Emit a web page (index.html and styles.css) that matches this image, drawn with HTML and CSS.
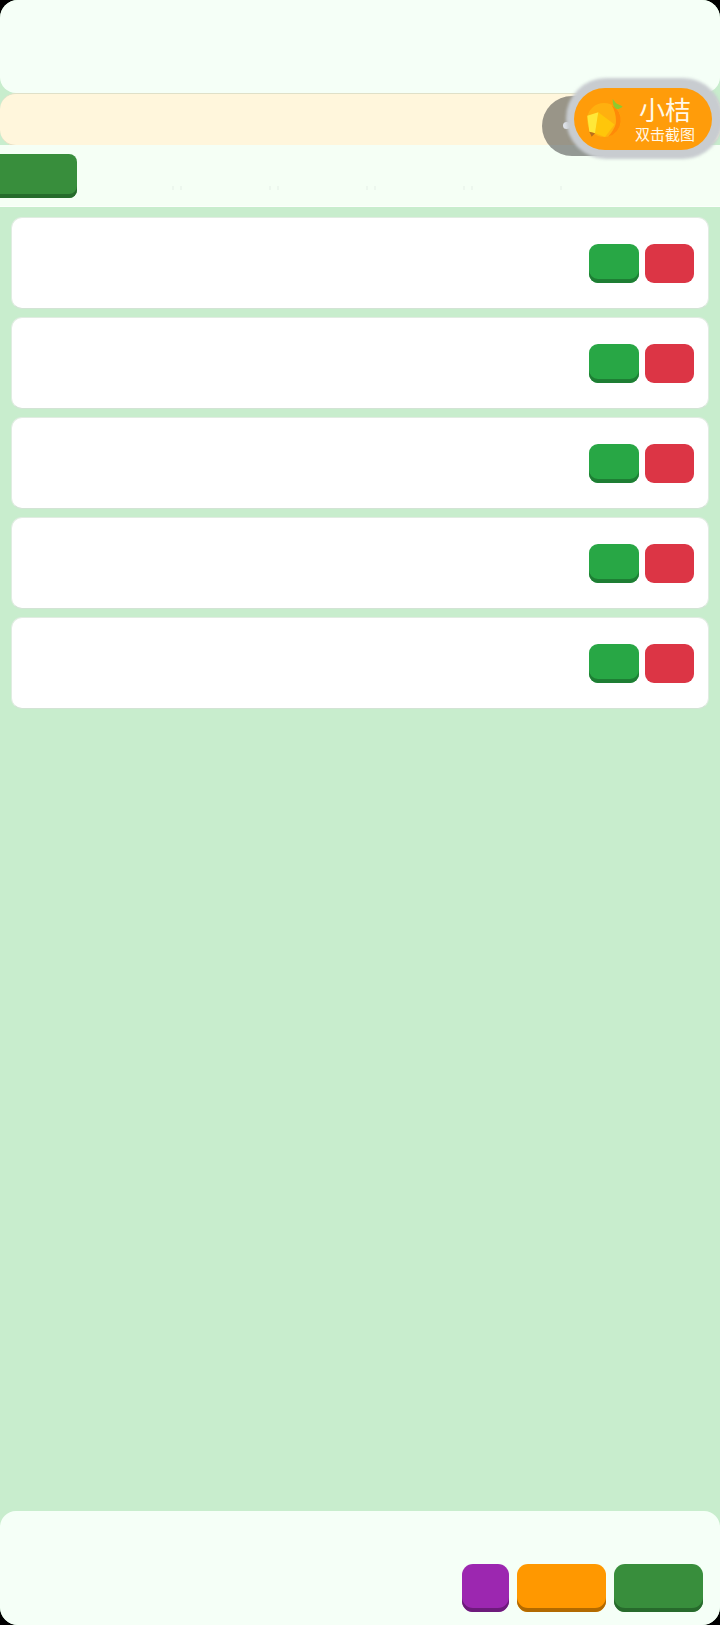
FILE: index.html
```html
<!DOCTYPE html>
<html lang="zh">
<head>
<meta charset="utf-8">
<title>小桔</title>
<link rel="stylesheet" href="styles.css">
</head>
<body>
<div class="app">
  <header class="header"></header>
  <div class="notice"></div>
  <nav class="tabs">
    <button class="btn btn-tab"></button>
    <div class="tab-marks">
      <span class="mark"><i></i><i></i></span>
      <span class="mark"><i></i><i></i></span>
      <span class="mark"><i></i><i></i></span>
      <span class="mark"><i></i><i></i></span>
      <span class="mark"><i></i></span>
    </div>
  </nav>
  <main class="list">
    <div class="card"><button class="btn btn-green"></button><button class="btn btn-red"></button></div>
    <div class="card"><button class="btn btn-green"></button><button class="btn btn-red"></button></div>
    <div class="card"><button class="btn btn-green"></button><button class="btn btn-red"></button></div>
    <div class="card"><button class="btn btn-green"></button><button class="btn btn-red"></button></div>
    <div class="card"><button class="btn btn-green"></button><button class="btn btn-red"></button></div>
  </main>
  <footer class="footer">
    <button class="btn btn-purple"></button>
    <button class="btn btn-orange"></button>
    <button class="btn btn-forest"></button>
  </footer>
  <div class="float-back"><span class="float-dot"></span></div>
  <div class="float-ring"></div>
  <div class="float-pill">
    <svg class="float-icon" viewBox="0 0 40 44" width="40" height="44" aria-hidden="true">
      <circle cx="19" cy="23" r="17" fill="#ffb00f"/>
      <path d="M26.700 8A17 17 0 0 1 23.300 39.500C28 34 31 29 31 24C31 18 29.500 13 26.700 8Z" fill="#ff8a08"/>
      <path d="M27.700 2C29.500 4 30.500 5.500 31.500 6.500C33.500 7.500 36 8.500 37.700 9.700C36 11 33.500 12.300 31.700 12C30 11 28.800 10 28.300 8C27.800 6 27.500 4 27.700 2Z" fill="#8fc92f"/>
      <path d="M13.300 15.300L29.500 27.500L20 40L10 36.300Z" fill="#ffc60a"/>
      <path d="M2.300 18.700L13.300 15.300L10 36.300L4.300 34.700Z" fill="#ffe838"/>
      <path d="M4.300 34.700L10 36.300L6.700 39.700Z" fill="#b96f1c"/>
    </svg>
    <div class="float-text">
      <span class="float-title">小桔</span>
      <span class="float-sub">双击截图</span>
    </div>
  </div>
</div>
</body>
</html>
```
FILE: styles.css
```css
* { box-sizing: border-box; }
html, body { margin: 0; padding: 0; background: #000; }
body { width: 720px; height: 1625px; overflow: hidden; }
button { border: 0; padding: 0; display: block; }

.app {
  position: relative;
  display: flex;
  flex-direction: column;
  width: 720px;
  height: 1625px;
  background: #c8edcd;
  border-radius: 18px;
  overflow: hidden;
}

.header {
  height: 93px;
  flex: none;
  background: #f5fff7;
  border-radius: 0 0 16px 16px;
}

.notice {
  height: 53px;
  flex: none;
  background: #fff6dc;
  border-top: 1px solid #dfe0c8;
  border-bottom: 1px solid #e8dfc4;
  border-radius: 16px;
}

.tabs {
  height: 62px;
  flex: none;
  display: flex;
  align-items: flex-start;
  background: #f5fff5;
  border-bottom: 1px solid #fbfffb;
  margin-top: -1px;
  padding-top: 9px;
}

.btn { border-radius: 9px; }

.btn-tab {
  width: 77px;
  height: 44px;
  flex: none;
  background: #388e3c;
  border-radius: 0 8px 8px 0;
  box-shadow: inset 0 -4px 0 #266b2c;
}

.tab-marks {
  flex: 1;
  display: flex;
  padding: 32px 0 0 95px;
  gap: 84px;
}

.mark { display: flex; gap: 6px; width: 13px; }
.mark i { display: block; width: 2px; height: 4px; background: #edf7ee; }

.list {
  flex: 1;
  display: flex;
  flex-direction: column;
  gap: 8px;
  padding: 10px 11px 0;
}

.card {
  height: 92px;
  flex: none;
  display: flex;
  justify-content: flex-end;
  align-items: center;
  gap: 6px;
  padding: 1px 14px 0 0;
  background: #fff;
  border: 1px solid #e0ece1;
  border-bottom-color: #d3e3d5;
  border-radius: 11px;
}

.btn-green, .btn-red { height: 39px; }
.btn-green { width: 50px; background: #28a745; box-shadow: inset 0 -4px 0 #1e7e34; }
.btn-red { width: 49px; background: #dc3545; }

.footer {
  height: 114px;
  flex: none;
  display: flex;
  justify-content: flex-end;
  align-items: flex-end;
  gap: 8px;
  padding: 0 17px 13px 0;
  background: #f5fff7;
  border-radius: 16px;
}

.footer .btn { height: 48px; border-radius: 11px; }
.btn-purple { width: 47px; background: #9c27b0; box-shadow: inset 0 -4px 0 #6d1b7b; }
.btn-orange { width: 89px; background: #ff9800; box-shadow: inset 0 -4px 0 #b26a00; }
.btn-forest { width: 89px; background: #388e3c; box-shadow: inset 0 -4px 0 #276a2c; }

.float-back {
  position: absolute;
  left: 542px;
  top: 96px;
  width: 170px;
  height: 60px;
  background: rgba(60, 60, 60, 0.52);
  border-radius: 30px;
}

.float-dot {
  position: absolute;
  left: 21px;
  top: 26px;
  width: 7px;
  height: 7px;
  border-radius: 50%;
  background: #dfe3ea;
}

.float-ring {
  position: absolute;
  left: 566px;
  top: 78px;
  width: 157px;
  height: 81px;
  background: #c8ccd0;
  border-radius: 40px;
  filter: blur(1.5px);
}

.float-pill {
  position: absolute;
  left: 574px;
  top: 88px;
  width: 138px;
  height: 62px;
  display: flex;
  align-items: flex-start;
  padding: 9px 0 0 11px;
  background: #ff9c0a;
  border-radius: 31px;
}

.float-icon { flex: none; }

.float-text {
  display: flex;
  flex-direction: column;
  align-items: center;
  gap: 3px;
  margin: -2px 0 0 10px;
  font-family: "Noto Sans CJK SC", sans-serif;
  color: #fff8e8;
}

.float-title { font-size: 26px; line-height: 28px; font-weight: 400; }
.float-sub { font-size: 15px; line-height: 16px; font-weight: 400; }
```
